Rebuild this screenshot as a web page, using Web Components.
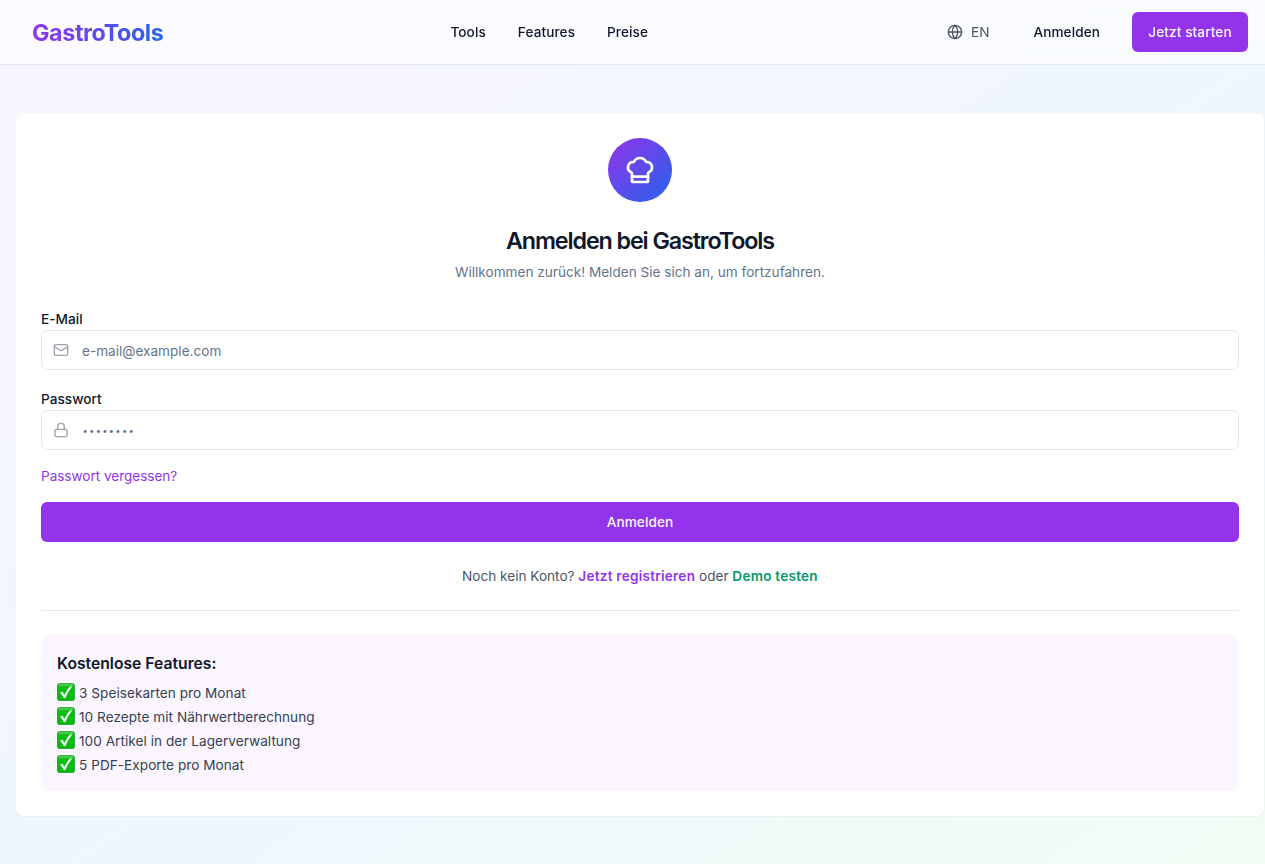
<!DOCTYPE html>
<html lang="de">
<head>
<meta charset="utf-8">
<title>GastroTools – Anmelden</title>
<style>
html{overflow:hidden}
body{margin:0;width:1280px;font-family:Inter,"Liberation Sans",sans-serif;font-size:13.6px;line-height:20px;color:#0f172a;overflow:hidden}
</style>
</head>
<body>
<gt-page></gt-page>
<script>
const define = (name, css, html) => customElements.define(name, class extends HTMLElement {
  constructor() {
    super();
    const t = document.createElement('template');
    t.innerHTML = `<style>*{box-sizing:border-box}${css}</style>${html}`;
    this.attachShadow({mode: 'open'}).append(t.content.cloneNode(true));
  }
});

const ICONS = {
  globe: '<circle cx="12" cy="12" r="10"/><path d="M12 2a14.5 14.5 0 0 0 0 20 14.5 14.5 0 0 0 0-20"/><path d="M2 12h20"/>',
  mail: '<rect width="20" height="16" x="2" y="4" rx="2"/><path d="m22 7-8.97 5.7a1.94 1.94 0 0 1-2.06 0L2 7"/>',
  lock: '<rect width="18" height="11" x="3" y="11" rx="2"/><path d="M7 11V7a5 5 0 0 1 10 0v4"/>',
  chef: '<path d="M17 21a1 1 0 0 0 1-1v-5.35c0-.457.316-.844.727-1.041a4 4 0 0 0-2.134-7.589 5 5 0 0 0-9.186 0 4 4 0 0 0-2.134 7.588c.411.198.727.585.727 1.041V20a1 1 0 0 0 1 1Z"/><path d="M6 17h12"/>'
};
customElements.define('gt-icon', class extends HTMLElement {
  constructor() { super(); this.attachShadow({mode: 'open'}); }
  connectedCallback() {
    const s = this.getAttribute('size') || 16;
    this.shadowRoot.innerHTML = `<style>:host{display:block;flex:none;width:${s}px;height:${s}px}svg{display:block}</style>
      <svg width="${s}" height="${s}" viewBox="0 0 24 24" fill="none" stroke="currentColor" stroke-width="2" stroke-linecap="round" stroke-linejoin="round">${ICONS[this.getAttribute('name')]}</svg>`;
  }
});

define('gt-button', `
  :host{display:flex;align-items:center;justify-content:center;height:40px;padding:0 16px;border-radius:6px;background:#9333ea;color:#f8fafc;font-weight:500;letter-spacing:.1px}
`, `<slot></slot>`);

define('gt-header', `
  :host{display:flex;align-items:center;justify-content:space-between;height:65px;padding:0 32px;border-bottom:1px solid #e2e8f0;background:rgba(255,255,255,.6);backdrop-filter:blur(8px)}
  .logo{margin-top:2px;font-size:23.3px;line-height:32px;font-weight:700;letter-spacing:-.38px;background:linear-gradient(to right,#9333ea,#2563eb);-webkit-background-clip:text;background-clip:text;color:transparent}
  nav{display:flex;gap:32px;font-weight:500;letter-spacing:.09px}
  .right{display:flex;align-items:center;gap:16px}
  .lang{display:flex;align-items:center;gap:8px;padding:0 12px;color:#4b5563}
  .login{padding:0 16px;font-weight:500;letter-spacing:.09px}
  gt-button{width:116px}
`, `<div class="logo">GastroTools</div>
  <nav><span>Tools</span><span>Features</span><span>Preise</span></nav>
  <div class="right"><div class="lang"><gt-icon name="globe"></gt-icon><span>EN</span></div><span class="login">Anmelden</span><gt-button>Jetzt starten</gt-button></div>`);

define('gt-field', `
  :host{display:block}
  .label{font-weight:500;height:21px;line-height:20px;letter-spacing:.05px}
  .box{display:flex;align-items:center;gap:13px;height:40px;border:1px solid #e2e8f0;border-radius:6px;padding:0 11px;color:#9ca3af}
  .ph{color:#64748b;padding-top:2px}
  :host([masked]) .ph{font-size:9.4px;letter-spacing:1.3px;padding-left:.5px}
`, `<div class="label"><slot name="label"></slot></div><div class="box"><slot name="icon"></slot><span class="ph"><slot></slot></span></div>`);

define('gt-check', `
  :host{display:flex;align-items:center;height:24px;gap:4px;letter-spacing:.04px}
  svg{display:block;flex:none;margin-top:-3px}
`, `<svg width="18" height="18" viewBox="0 0 18 18">
    <defs><linearGradient id="g" x2="0" y2="1"><stop stop-color="#35c93d"/><stop offset=".2" stop-color="#0fbd19"/><stop offset="1" stop-color="#00bd05"/></linearGradient></defs>
    <rect x=".4" y=".4" width="17.2" height="17.2" rx="2.6" fill="url(#g)" stroke="#159c2b" stroke-width=".8"/>
    <path d="M2 2h14" stroke="#75dc79" stroke-width=".9" stroke-linecap="round"/>
    <path d="M3 9.6 5.4 8.4Q6.6 10.2 7.3 12 9.6 6.8 13.2 3.2L15.2 3.6Q10.8 8.9 8.4 14.9H6.4Q5.2 11.8 3 9.6Z" fill="#fff"/>
  </svg><span><slot></slot></span>`);

define('gt-features', `
  :host{display:block;height:156px;border-radius:8px;background:#faf5ff;padding:17px 16px 16px;color:#374151}
  h3{margin:0 0 5px;font-size:15.7px;line-height:24px;font-weight:600;color:#0f172a}
`, `<h3>Kostenlose Features:</h3><gt-check>3 Speisekarten pro Monat</gt-check><gt-check>10 Rezepte mit Nährwertberechnung</gt-check><gt-check>100 Artikel in der Lagerverwaltung</gt-check><gt-check>5 PDF-Exporte pro Monat</gt-check>`);

define('gt-login-card', `
  :host{display:flex;flex-direction:column;height:703px;margin:48px 16px 0;padding:25px;border-radius:8px;background:#fff;box-shadow:0 1px 2px rgba(0,0,0,.05)}
  .badge{align-self:center;display:flex;align-items:center;justify-content:center;width:64px;height:64px;border-radius:50%;background:linear-gradient(to bottom right,#9333ea,#2563eb);color:#fff}
  h1{margin:27px 0 0;text-align:center;font-size:23.3px;line-height:24px;font-weight:600;letter-spacing:-1.1px}
  .sub{margin-top:9px;text-align:center;color:#64748b}
  form{display:flex;flex-direction:column;margin-top:27px}
  gt-field+gt-field{margin-top:19px}
  .forgot{margin:16px 0;letter-spacing:-.04px;color:#9333ea}
  .alt{margin-top:24px;text-align:center;color:#4b5563}
  b{font-weight:600;letter-spacing:.23px;color:#9333ea}
  b.demo{color:#059669}
  hr{width:100%;margin:24px 0;border:0;border-top:1px solid #e2e8f0}
`, `<div class="badge"><gt-icon name="chef" size="32"></gt-icon></div>
  <h1>Anmelden bei GastroTools</h1>
  <div class="sub">Willkommen zurück! Melden Sie sich an, um fortzufahren.</div>
  <form>
    <gt-field><span slot="label">E-Mail</span><gt-icon slot="icon" name="mail"></gt-icon>e-mail@example.com</gt-field>
    <gt-field masked><span slot="label">Passwort</span><gt-icon slot="icon" name="lock"></gt-icon>••••••••</gt-field>
    <div class="forgot">Passwort vergessen?</div>
    <gt-button>Anmelden</gt-button>
  </form>
  <div class="alt">Noch kein Konto? <b>Jetzt registrieren</b> oder <b class="demo">Demo testen</b></div>
  <hr>
  <gt-features></gt-features>`);

define('gt-page', `
  :host{display:flow-root;height:864px;background:linear-gradient(to bottom right,#faf5ff,#eff6ff,#f0fdf4)}
`, `<gt-header></gt-header><gt-login-card></gt-login-card>`);
</script>
</body>
</html>
